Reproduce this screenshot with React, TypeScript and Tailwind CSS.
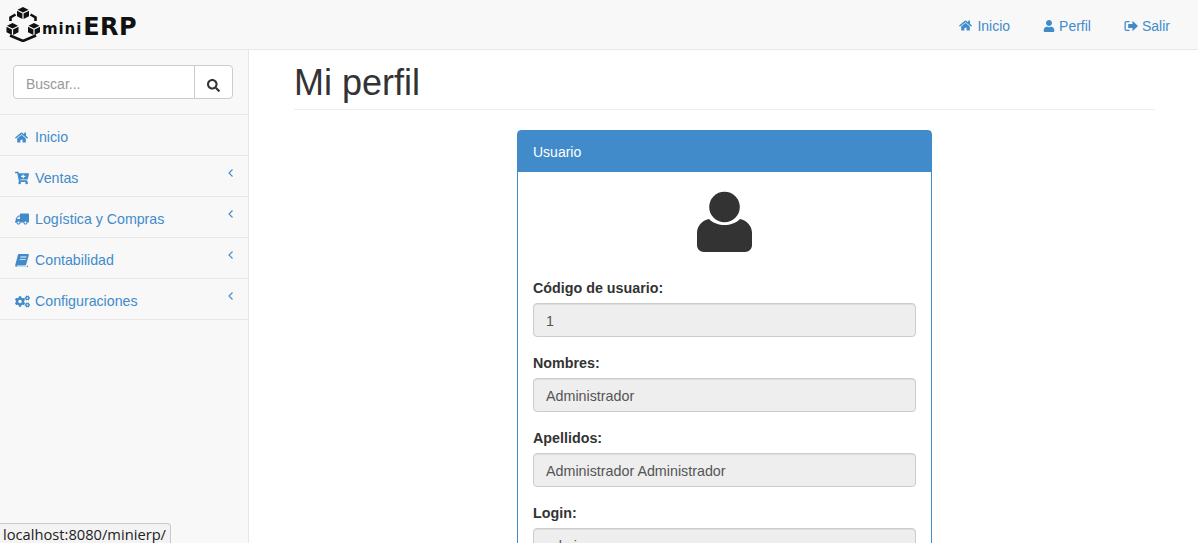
import { FaHome, FaUser, FaSearch, FaCartPlus, FaTruck, FaCogs } from "react-icons/fa";
import type { ReactNode } from "react";

const font = "font-['Liberation_Sans',Arial,sans-serif]";

// one isometric block of the logo, 12 wide and 12 high
const Cube = ({ x, y }: { x: number; y: number }) => (
  <g transform={`translate(${x} ${y})`}>
    <path d="M6 0l5.500 2.700L6 5.400.5 2.700z" />
    <path d="M0 3.800l5.400 2.700V12L0 9.300z" />
    <path d="M12 3.800L6.600 6.500V12L12 9.300z" />
  </g>
);

const Logo = () => (
  <div className="flex items-start pl-[6px] pt-[6px]">
    <svg width="35" height="36" viewBox="0 0 35 36" className="shrink-0">
      <g fill="#111">
        <Cube x={11} y={1} />
        <Cube x={0.5} y={17} />
        <Cube x={22} y={17} />
      </g>
      <g fill="none" stroke="#111" strokeWidth="2.600">
        <path d="M9.500 8.500L4.500 11.500V15" />
        <path d="M24.500 8.500L29.500 11.500V15" />
        <path d="M4 29.500L17 35l13-5.500" />
      </g>
    </svg>
    <span className="ml-[1px] mt-[13px] font-['DejaVu_Sans',sans-serif] font-bold text-[15px] leading-[20px] tracking-[0.9px] text-[#111]">mini</span>
    <span className="ml-[1px] mt-[7px] font-['DejaVu_Sans',sans-serif] font-bold text-[24px] leading-[28px] tracking-[0.4px] text-[#111]">ERP</span>
  </div>
);

const TopLink = ({ icon, label, className }: { icon: ReactNode; label: string; className: string }) => (
  <a className={`flex items-center text-[#428bca] text-sm ${className}`}>
    {icon}
    <span>{label}</span>
  </a>
);

const SignOut = () => (
  <svg width="14" height="12" viewBox="0 0 14 12" fill="#428bca">
    <path d="M5.500 1H2.500C1.400 1 .5 1.900.5 3v6c0 1.100.9 2 2 2h3V9.800H2.700c-.5 0-.9-.4-.9-.9V3.100c0-.5.4-.9.900-.9h2.800z" />
    <path d="M8.500.8L14 6l-5.500 5.200V8H4.200V4h4.300z" />
  </svg>
);

const Book = () => (
  <svg width="14" height="13" viewBox="0 0 14 13" fill="#428bca">
    <path d="M3.600 0H13c.7 0 1 .5.800 1.200L11.300 10c-.3 1-.9 1.500-1.900 1.500H2.300c-.6 0-.9.500-.7.900.1.200.3.300.6.300h9.300c.4 0 .7-.2.800-.6l.2-.6.700.300-.3 1.100c-.2.600-.7 1-1.300 1H2C.9 13.300 0 12.100.3 10.700L3 .6c.1-.4.300-.6.600-.6zM5.500 2.600l-.2.800h6l.2-.8zM4.800 5l-.2.800h6l.2-.8z" fillRule="evenodd" />
  </svg>
);

const Chevron = () => (
  <svg width="6" height="8" viewBox="0 0 6 8" fill="none" stroke="#428bca" strokeWidth="1.100" className="absolute left-[228px] top-[13px]">
    <path d="M4.500.5L1 4l3.500 3.500" />
  </svg>
);

const menu: { icon: ReactNode; label: string; sub?: boolean }[] = [
  { icon: <FaHome size={13} />, label: "Inicio" },
  { icon: <FaCartPlus size={14} />, label: "Ventas", sub: true },
  { icon: <FaTruck size={14} className="-scale-x-100" />, label: "Logística y Compras", sub: true },
  { icon: <Book />, label: "Contabilidad", sub: true },
  { icon: <FaCogs size={15} />, label: "Configuraciones", sub: true },
];

const Field = ({ label, value }: { label: string; value: string }) => (
  <div className="mb-[16px]">
    <label className="block h-5 mb-[5px] font-bold text-[14.3px] leading-5 text-[#333]">{label}</label>
    <div className="h-[34px] px-3 pt-[3px] flex items-center bg-[#eeeeee] border border-[#cccccc] rounded text-[14.3px] text-[#555] shadow-[inset_0_1px_1px_rgba(0,0,0,0.075)]">
      {value}
    </div>
  </div>
);

const App = () => {
  return (
    <div className={`relative h-screen overflow-hidden bg-white flex flex-col ${font}`}>
      <header className="h-[50px] shrink-0 flex items-start justify-between bg-[#f8f8f8] border-b border-[#e7e7e7]">
        <Logo />
        <nav className="flex items-center h-full pt-[2px] pr-[28px]">
          <TopLink icon={<FaHome size={13} className="mr-[5px]" />} label="Inicio" className="mr-[33px]" />
          <TopLink icon={<FaUser size={12} className="mr-[4px]" />} label="Perfil" className="mr-[33px]" />
          <TopLink icon={<span className="mr-[4px] flex"><SignOut /></span>} label="Salir" className="" />
        </nav>
      </header>

      <div className="flex flex-1 min-h-0">
        <aside className="w-[249px] shrink-0 bg-[#f8f8f8] border-r border-[#e7e7e7]">
          <div className="h-[65px] px-[13px] pt-[15px] border-b border-[#e7e7e7]">
            <div className="flex h-[34px] w-[220px] bg-white border border-[#cccccc] rounded">
              <div className="flex-1 pl-3 pt-[2px] text-sm leading-[32px] text-[#999]">Buscar...</div>
              <div className="w-[38px] pt-[6px] flex items-center justify-center border-l border-[#cccccc] text-[#333]">
                <FaSearch size={13} />
              </div>
            </div>
          </div>
          {menu.map((item) => (
            <div key={item.label} className="relative h-[41px] pt-[4px] flex items-center border-b border-[#e7e7e7] text-[#428bca] text-[14.2px]">
              <span className="w-[35px] pl-[15px] flex justify-start">{item.icon}</span>
              <span className="pt-[2px]">{item.label}</span>
              {item.sub && <Chevron />}
            </div>
          ))}
        </aside>

        <main className="flex-1 min-w-0 pl-[45px] pr-[43px]">
          <h1 className="h-[60px] pt-[13px] border-b border-[#eeeeee] text-[36px] leading-[40px] text-[#333]">Mi perfil</h1>
          <section className="mt-5 ml-[223px] w-[415px] border border-[#428bca] rounded">
            <div className="h-[41px] flex items-center px-[15px] bg-[#428bca] text-sm text-white">Usuario</div>
            <div className="px-[15px] pt-[19px]">
              <div className="flex justify-center mb-[26px]">
                <svg width="55" height="61" viewBox="0 0 55 61" fill="#333">
                  <circle cx="27.500" cy="16" r="15.300" />
                  <path d="M12 28c4 4 10 6 15.500 6S39 32 43 28c7 1.500 12 7 12 14v12c0 4-3 7-7 7H7c-4 0-7-3-7-7V42c0-7 5-12.500 12-14z" />
                </svg>
              </div>
              <Field label="Código de usuario:" value="1" />
              <Field label="Nombres:" value="Administrador" />
              <Field label="Apellidos:" value="Administrador Administrador" />
              <Field label="Login:" value="admin" />
            </div>
          </section>
        </main>
      </div>

      <div className="absolute left-0 bottom-0 h-[20px] w-[171px] pl-[3px] bg-[#f3f3f3] border-t border-r border-[#c8c8c8] rounded-tr text-[14.7px] leading-[20px] text-[#222] font-['Open_Sans',sans-serif]">
        localhost:8080/minierp/
      </div>
    </div>
  );
};

export default App;
